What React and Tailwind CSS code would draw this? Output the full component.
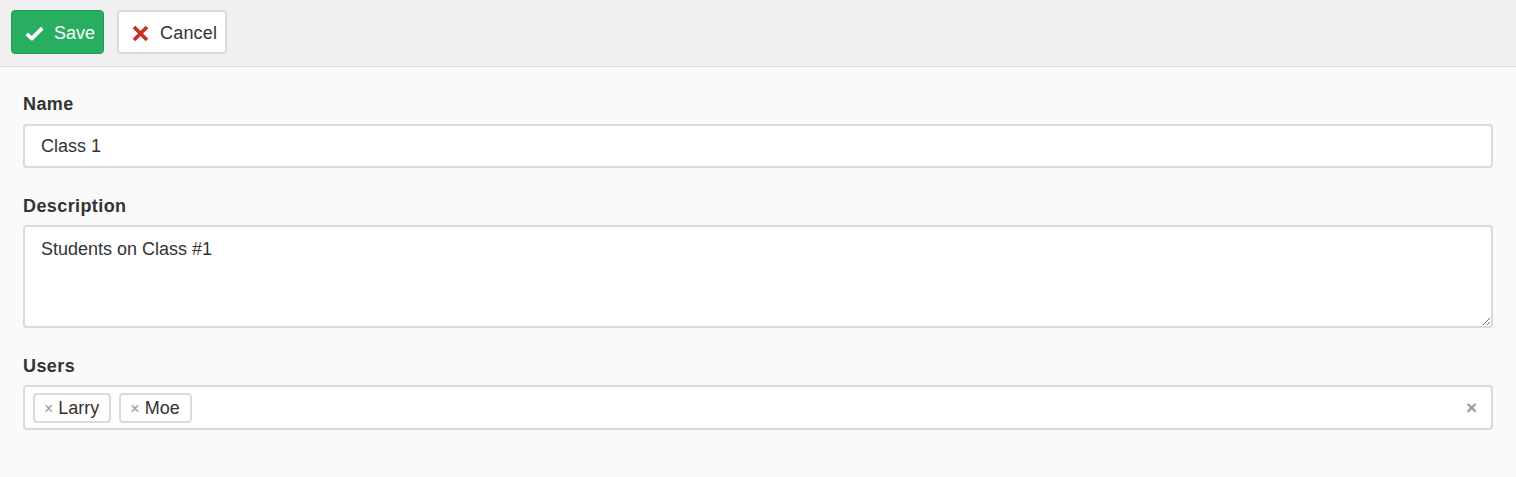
export default function App() {
  return (
    <div className="min-h-[477px] bg-[#fafafa] font-['Liberation_Sans',Arial,sans-serif] text-[#333]">
      {/* Toolbar */}
      <div className="h-[67px] bg-[#f0f0f0] border-b border-[#dcdcdc] flex items-start gap-[13px] pt-[10px] pl-[11px]">
        <button className="h-[44px] w-[93px] flex items-center gap-[10px] pl-[13px] pt-[2px] rounded-[4px] bg-[#27ae60] border border-[#239a55] text-white text-[18px]">
          <svg width="19" height="15" viewBox="0 0 19 15">
            <path d="M1.8 7.8 L6.8 12.6 L17.2 2.2" fill="none" stroke="white" strokeWidth="3.8" strokeLinejoin="round" />
          </svg>
          Save
        </button>
        <button className="h-[44px] w-[110px] flex items-center gap-[11px] pl-[13px] pt-[2px] rounded-[4px] bg-white border-2 border-[#dadada] text-[#333] text-[18px] tracking-[0.2px]">
          <svg width="17" height="17" viewBox="0 0 17 17">
            <path d="M2 2 L15 15 M15 2 L2 15" fill="none" stroke="#c9302c" strokeWidth="3.8" />
          </svg>
          Cancel
        </button>
      </div>

      {/* Form */}
      <div className="px-[23px] pt-[27px] pb-[46px]">
        <label className="block text-[18px] leading-[20px] font-bold tracking-[0.4px] text-[#333] mb-[10px]">Name</label>
        <input
          readOnly
          defaultValue="Class 1"
          className="block w-full h-[44px] px-[16px] rounded-[4px] bg-white border-2 border-[#dadada] text-[18px] text-[#333] outline-none"
        />

        <label className="block text-[18px] leading-[20px] font-bold tracking-[0.4px] text-[#333] mt-[28px] mb-[9px]">Description</label>
        <textarea
          readOnly
          defaultValue="Students on Class #1"
          className="block w-full h-[103px] px-[16px] py-[11px] rounded-[4px] bg-white border-2 border-[#dadada] text-[18px] leading-[22px] text-[#333] outline-none resize-y"
        />

        <label className="block text-[18px] leading-[20px] font-bold tracking-[0.4px] text-[#333] mt-[28px] mb-[9px]">Users</label>
        <div className="relative w-full h-[45px] rounded-[4px] bg-white border-2 border-[#dadada] flex items-center gap-[8px] pl-[8px]">
          {['Larry', 'Moe'].map((u) => (
            <span
              key={u}
              className="h-[30px] flex items-center gap-[5px] pl-[9px] pr-[10px] pt-[2px] rounded-[4px] bg-white border-2 border-[#dadada] text-[18px] text-[#333]"
            >
              <span className="text-[#999] text-[16px]">×</span>
              {u}
            </span>
          ))}
          <span className="absolute right-[14px] top-1/2 -translate-y-1/2 text-[#999] text-[19px] font-bold">×</span>
        </div>
      </div>
    </div>
  )
}
